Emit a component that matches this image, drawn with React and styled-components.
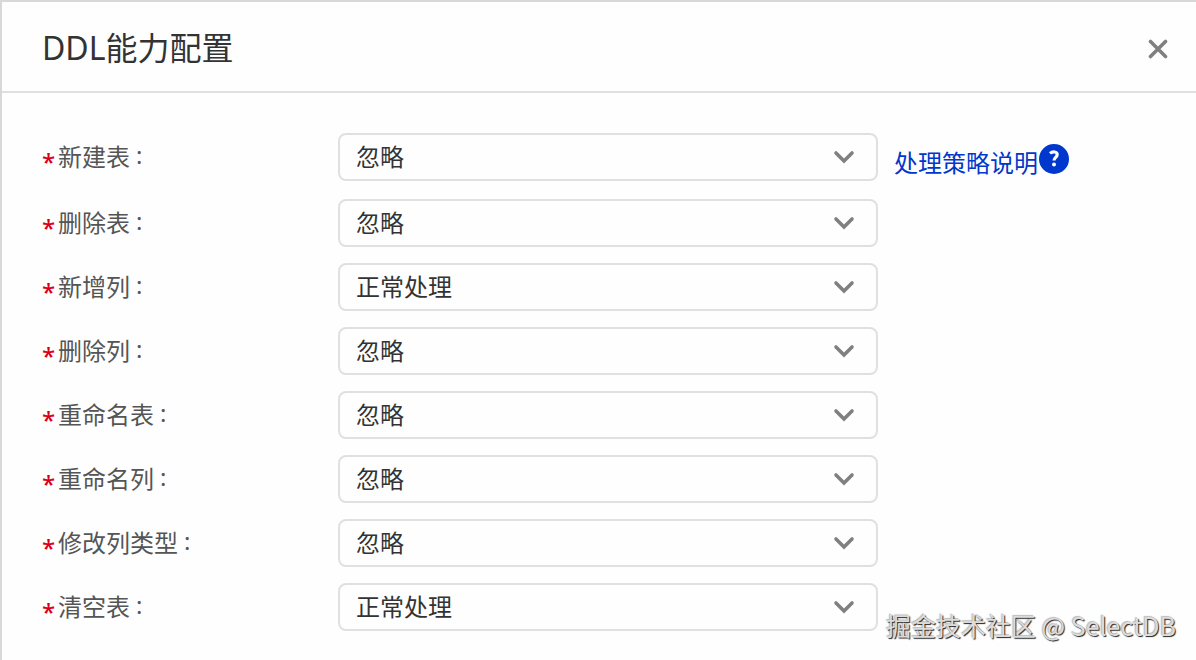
import React, { useState } from 'react';
import styled, { createGlobalStyle } from 'styled-components';

const GlobalStyle = createGlobalStyle`
  * {
    box-sizing: border-box;
  }

  body {
    margin: 0;
    background: #fefefe;
    font-family: 'Noto Sans', 'Noto Sans CJK SC', sans-serif;
  }
`;

const Dialog = styled.section`
  position: relative;
  min-height: 100vh;
  background: #fefefe;
  border-top: 2px solid #d8d8d8;
  border-left: 2px solid #d8d8d8;
`;

const DialogHeader = styled.header`
  display: flex;
  align-items: center;
  justify-content: space-between;
  height: 91px;
  padding: 2px 24px 0 40px;
  border-bottom: 2px solid #e0e0e0;
`;

const Title = styled.h2`
  margin: 0;
  font-size: 32px;
  font-weight: 400;
  line-height: 44px;
  color: #333;
`;

const CloseButton = styled.button`
  display: flex;
  align-items: center;
  justify-content: center;
  width: 28px;
  height: 28px;
  margin-top: 2px;
  padding: 0;
  background: none;
  border: none;
  color: #808080;
  cursor: pointer;
`;

const Form = styled.form`
  display: flex;
  flex-direction: column;
  gap: 16px;
  padding: 40px 38px 28px;
`;

const FormRow = styled.div`
  display: grid;
  grid-template-columns: 298px minmax(200px, 540px) auto;
  align-items: start;
  min-height: ${(props) => (props.$tall ? '50px' : '48px')};
`;

const Label = styled.label`
  display: flex;
  height: 48px;
  font-size: 24px;
  line-height: 48px;
  color: #555;
`;

const Required = styled.span`
  width: 18px;
  padding-left: 2px;
  line-height: 58px;
  font-weight: 500;
  color: #d9001b;
`;

const Colon = styled.span`
  margin-left: 6px;
  line-height: 44px;
`;

const SelectBox = styled.div`
  position: relative;
`;

const Select = styled.select`
  display: block;
  width: 100%;
  height: 48px;
  padding: 0 56px 2px 16px;
  appearance: none;
  background: #fefefe;
  border: 2px solid #e0e0e0;
  border-radius: 8px;
  font-family: inherit;
  font-size: 24px;
  color: #333;
  cursor: pointer;

  &:focus {
    outline: none;
    border-color: #0037cc;
  }
`;

const Chevron = styled.svg`
  position: absolute;
  top: 12px;
  right: 22px;
  pointer-events: none;
`;

const HelpLink = styled.a`
  display: flex;
  align-items: flex-start;
  height: 50px;
  padding: 10px 0 0 16px;
  font-size: 24px;
  line-height: 40px;
  color: #0037cc;
  text-decoration: none;
  white-space: nowrap;
`;

const Watermark = styled.div`
  position: absolute;
  right: 20px;
  bottom: 15px;
  font-family: 'Noto Sans CJK SC', sans-serif;
  font-size: 25px;
  line-height: 40px;
  color: #dcdcdc;
  text-shadow: 1px 1px 1px #222, -1px -1px 1px #bbb;
`;

const operations = [
  { id: 'createTable', label: '新建表', value: 'ignore', help: true },
  { id: 'dropTable', label: '删除表', value: 'ignore' },
  { id: 'addColumn', label: '新增列', value: 'normal' },
  { id: 'dropColumn', label: '删除列', value: 'ignore' },
  { id: 'renameTable', label: '重命名表', value: 'ignore' },
  { id: 'renameColumn', label: '重命名列', value: 'ignore' },
  { id: 'modifyType', label: '修改列类型', value: 'ignore' },
  { id: 'truncateTable', label: '清空表', value: 'normal' }
];

const HelpIcon = () => (
  <svg width="32" height="32" viewBox="0 0 32 32" aria-hidden="true">
    <circle cx="16" cy="16" r="15" fill="#0037cc" />
    <path
      d="M12 10.4C14.6 8.2 19.2 8.4 19.2 11.6c0 2.8-3.2 2.8-3.2 6"
      fill="none"
      stroke="#fff"
      strokeWidth="3.2"
    />
    <circle cx="16" cy="21.4" r="2" fill="#fff" />
  </svg>
);

const App = () => {
  const [values, setValues] = useState(
    Object.fromEntries(operations.map((op) => [op.id, op.value]))
  );

  const handleChange = (e) => {
    setValues({
      ...values,
      [e.target.name]: e.target.value
    });
  };

  return (
    <>
      <GlobalStyle />
      <Dialog role="dialog" aria-labelledby="ddl-title">
        <DialogHeader>
          <Title id="ddl-title">DDL能力配置</Title>
          <CloseButton type="button" aria-label="关闭">
            <svg width="20" height="20" viewBox="0 0 20 20">
              <path
                d="M2.5 2.5l15 15M17.5 2.5l-15 15"
                stroke="currentColor"
                strokeWidth="3.6"
                strokeLinecap="round"
              />
            </svg>
          </CloseButton>
        </DialogHeader>

        <Form>
          {operations.map((op) => (
            <FormRow key={op.id} $tall={op.help}>
              <Label htmlFor={op.id}>
                <Required>*</Required>
                {op.label}
                <Colon>:</Colon>
              </Label>
              <SelectBox>
                <Select
                  id={op.id}
                  name={op.id}
                  value={values[op.id]}
                  onChange={handleChange}
                >
                  <option value="ignore">忽略</option>
                  <option value="normal">正常处理</option>
                </Select>
                <Chevron width="24" height="24" viewBox="0 0 24 24">
                  <path
                    d="M4 8l8 8 8-8"
                    fill="none"
                    stroke="#808080"
                    strokeWidth="3.6"
                    strokeLinecap="round"
                  />
                </Chevron>
              </SelectBox>
              {op.help && (
                <HelpLink href="#help">
                  处理策略说明
                  <HelpIcon />
                </HelpLink>
              )}
            </FormRow>
          ))}
        </Form>

        <Watermark>掘金技术社区 @ SelectDB</Watermark>
      </Dialog>
    </>
  );
};

export default App;
